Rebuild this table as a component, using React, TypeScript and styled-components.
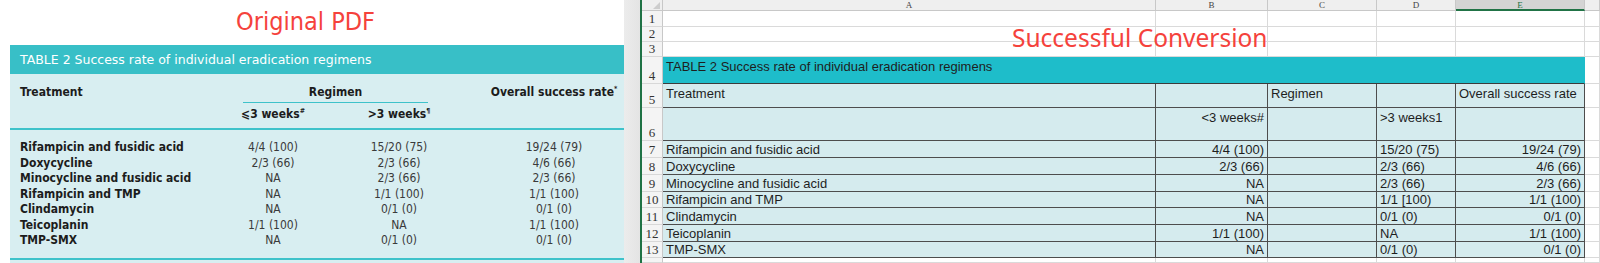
import React from "react";
import styled, { createGlobalStyle } from "styled-components";

const GlobalStyle = createGlobalStyle`
    html,
    body {
        margin: 0;
        padding: 0;
        background: #ffffff;
    }
    body {
        width: 1600px;
        height: 263px;
        overflow: hidden;
    }
`;

const pdfFont = `"DejaVu Sans Condensed", "DejaVu Sans", sans-serif`;
const sheetFont = `"Liberation Sans", Arial, sans-serif`;

const pdfRows = [
    ["Rifampicin and fusidic acid", "4/4 (100)", "15/20 (75)", "19/24 (79)"],
    ["Doxycycline", "2/3 (66)", "2/3 (66)", "4/6 (66)"],
    ["Minocycline and fusidic acid", "NA", "2/3 (66)", "2/3 (66)"],
    ["Rifampicin and TMP", "NA", "1/1 (100)", "1/1 (100)"],
    ["Clindamycin", "NA", "0/1 (0)", "0/1 (0)"],
    ["Teicoplanin", "1/1 (100)", "NA", "1/1 (100)"],
    ["TMP-SMX", "NA", "0/1 (0)", "0/1 (0)"],
];

// excel rows 7..13 : A, B, D, E
const sheetRows = [
    ["Rifampicin and fusidic acid", "4/4 (100)", "15/20 (75)", "19/24 (79)"],
    ["Doxycycline", "2/3 (66)", "2/3 (66)", "4/6 (66)"],
    ["Minocycline and fusidic acid", "NA", "2/3 (66)", "2/3 (66)"],
    ["Rifampicin and TMP", "NA", "1/1 [100)", "1/1 (100)"],
    ["Clindamycin", "NA", "0/1 (0)", "0/1 (0)"],
    ["Teicoplanin", "1/1 (100)", "NA", "1/1 (100)"],
    ["TMP-SMX", "NA", "0/1 (0)", "0/1 (0)"],
];

const columns = ["A", "B", "C", "D", "E", ""];

const App = () => {
    return (
        <Page>
            <GlobalStyle />
            <PdfPanel>
                <PdfTitle>Original PDF</PdfTitle>
                <PdfTable>
                    <PdfCaption>TABLE 2 Success rate of individual eradication regimens</PdfCaption>
                    <PdfHead>
                        <HeadCell>Treatment</HeadCell>
                        <RegimenCell>Regimen</RegimenCell>
                        <HeadCell $center $last>
                            Overall success rate<Sup>*</Sup>
                        </HeadCell>
                        <HeadCell />
                        <HeadCell $center>
                            ⩽3 weeks<Sup>#</Sup>
                        </HeadCell>
                        <HeadCell $center>
                            &gt;3 weeks<Sup>¶</Sup>
                        </HeadCell>
                        <HeadCell $last />
                    </PdfHead>
                    <PdfBody>
                        {pdfRows.map((row) => (
                            <React.Fragment key={row[0]}>
                                <PdfLabel>{row[0]}</PdfLabel>
                                <PdfValue>{row[1]}</PdfValue>
                                <PdfValue>{row[2]}</PdfValue>
                                <PdfValue $last>{row[3]}</PdfValue>
                            </React.Fragment>
                        ))}
                    </PdfBody>
                </PdfTable>
            </PdfPanel>
            <Gutter />
            <WindowEdge />
            <Sheet>
                <Corner />
                {columns.map((c, i) => (
                    <ColHead key={i} $selected={c === "E"}>
                        {c}
                    </ColHead>
                ))}

                {[1, 2, 3].map((r) => (
                    <React.Fragment key={r}>
                        <RowHead>{r}</RowHead>
                        {columns.map((_, i) => (
                            <Cell key={i} />
                        ))}
                    </React.Fragment>
                ))}

                <RowHead>4</RowHead>
                <TitleCell>TABLE 2 Success rate of individual eradication regimens</TitleCell>
                <Cell />

                <RowHead>5</RowHead>
                <Cell $body $top>Treatment</Cell>
                <Cell $body $top />
                <Cell $body $top>Regimen</Cell>
                <Cell $body $top />
                <Cell $body $top>Overall success rate</Cell>
                <Cell />

                <RowHead>6</RowHead>
                <Cell $body $top />
                <Cell $body $top $right>
                    &lt;3 weeks#
                </Cell>
                <Cell $body $top />
                <Cell $body $top>&gt;3 weeks1</Cell>
                <Cell $body $top />
                <Cell />

                {sheetRows.map((row, i) => (
                    <React.Fragment key={row[0]}>
                        <RowHead>{i + 7}</RowHead>
                        <Cell $body>{row[0]}</Cell>
                        <Cell $body $right>
                            {row[1]}
                        </Cell>
                        <Cell $body />
                        <Cell $body>{row[2]}</Cell>
                        <Cell $body $right>
                            {row[3]}
                        </Cell>
                        <Cell />
                    </React.Fragment>
                ))}

                {/* row 14, only its top edge is in view */}
                <RowHead />
                {columns.map((_, i) => (
                    <Cell key={i} />
                ))}

                <Callout>Successful Conversion</Callout>
            </Sheet>
        </Page>
    );
};

export default App;

const Page = styled.div`
    display: flex;
    width: 1600px;
    height: 263px;
    overflow: hidden;
    background: #ffffff;
`;

/* ---------- left : the pdf ---------- */

const PdfPanel = styled.section`
    width: 614px;
    margin-left: 10px;
    display: flex;
    flex-direction: column;
    font-family: ${pdfFont};
`;

const PdfTitle = styled.div`
    height: 45px;
    box-sizing: border-box;
    padding: 7px 0 0 226px;
    font-size: 25px;
    line-height: 30px;
    color: #f5423c;
`;

const PdfTable = styled.div`
    flex: 1;
    background: #d8eef1;
`;

const PdfCaption = styled.div`
    height: 29px;
    padding-left: 10px;
    background: #38bfc7;
    color: #ffffff;
    font-family: "DejaVu Sans", sans-serif;
    font-size: 12.5px;
    line-height: 29px;
`;

const PdfGrid = styled.div`
    display: grid;
    grid-template-columns: 190px 126px 126px 1fr;
    padding-left: 10px;
`;

const PdfHead = styled(PdfGrid)`
    padding-top: 10px;
    padding-bottom: 6px;
    row-gap: 3px;
    border-bottom: 2px solid #3ec2ca;
    font-size: 12px;
    font-weight: 700;
    line-height: 16px;
    color: #1c1c1c;
`;

const HeadCell = styled.div<{ $center?: boolean; $last?: boolean }>`
    white-space: nowrap;
    text-align: ${(p) => (p.$center ? "center" : "left")};
    padding-left: ${(p) => (p.$last ? "22px" : "0")};
`;

const RegimenCell = styled.div`
    grid-column: span 2;
    margin: 0 34px 0 33px;
    padding-bottom: 2px;
    border-bottom: 1px solid #3ec2ca;
    text-align: center;
`;

const Sup = styled.sup`
    font-size: 7px;
    line-height: 0;
    vertical-align: 5px;
`;

const PdfBody = styled(PdfGrid)`
    padding-top: 10px;
    padding-bottom: 9px;
    border-bottom: 2px solid #3ec2ca;
    font-size: 12px;
    line-height: 15.5px;
`;

const PdfLabel = styled.div`
    white-space: nowrap;
    font-weight: 700;
    color: #1c1c1c;
`;

const PdfValue = styled.div<{ $last?: boolean }>`
    white-space: nowrap;
    text-align: center;
    color: #3a3a3a;
    padding-left: ${(p) => (p.$last ? "22px" : "0")};
`;

const Gutter = styled.div`
    width: 16px;
    background: linear-gradient(to right, #ececec, #e4e4e4);
`;

const WindowEdge = styled.div`
    width: 2px;
    background: #1f7245;
`;

/* ---------- right : the spreadsheet ---------- */

const Sheet = styled.div`
    position: relative;
    flex: 1;
    display: grid;
    grid-template-columns: 21px 493px 112px 109px 79px 129px 1fr;
    grid-template-rows: 11px 16px 15px 15px 27px 24px 33px 17px 17px 17px 16px 17px 17px 16px 1fr;
    background: #ffffff;
    font-family: ${sheetFont};
    font-size: 13px;
    color: #1e1e1e;
`;

const Corner = styled.div`
    position: relative;
    box-sizing: border-box;
    background: #efefef;
    border-right: 1px solid #c8c8c8;
    border-bottom: 1px solid #c8c8c8;

    &::after {
        content: "";
        position: absolute;
        right: 2px;
        bottom: 1px;
        border-left: 7px solid transparent;
        border-bottom: 7px solid #cdcdcd;
    }
`;

const ColHead = styled.div<{ $selected?: boolean }>`
    box-sizing: border-box;
    display: flex;
    justify-content: center;
    align-items: center;
    background: ${(p) => (p.$selected ? "#d4d4d4" : "#efefef")};
    border-right: 1px solid #c8c8c8;
    border-bottom: ${(p) => (p.$selected ? "2px solid #217346" : "1px solid #c8c8c8")};
    font-family: "Liberation Serif", serif;
    font-size: 9px;
    line-height: 10px;
    color: ${(p) => (p.$selected ? "#217346" : "#444444")};
`;

const RowHead = styled.div`
    box-sizing: border-box;
    display: flex;
    justify-content: center;
    align-items: flex-end;
    background: #f4f4f4;
    border-right: 1px solid #c8c8c8;
    border-bottom: 1px solid #d8d8d8;
    font-family: "Liberation Serif", serif;
    font-size: 13px;
    line-height: 14px;
    color: #333333;
`;

const Cell = styled.div<{ $body?: boolean; $top?: boolean; $right?: boolean }>`
    box-sizing: border-box;
    display: flex;
    align-items: ${(p) => (p.$top ? "flex-start" : "flex-end")};
    justify-content: ${(p) => (p.$right ? "flex-end" : "flex-start")};
    padding: ${(p) => (p.$top ? "2px 3px 0" : "0 3px 0")};
    background: ${(p) => (p.$body ? "#d5ebee" : "#ffffff")};
    border-right: 1px solid ${(p) => (p.$body ? "#4d4d4d" : "#dadada")};
    border-bottom: 1px solid ${(p) => (p.$body ? "#4d4d4d" : "#dadada")};
    line-height: 15px;
    white-space: nowrap;
    overflow: hidden;
`;

const TitleCell = styled.div`
    grid-column: span 5;
    box-sizing: border-box;
    padding: 2px 3px 0;
    background: #1ebdca;
    border-right: 1px solid #1ebdca;
    border-bottom: 1px solid #3b3b3b;
    line-height: 15px;
    white-space: nowrap;
`;

const Callout = styled.div`
    position: absolute;
    left: 370px;
    top: 23px;
    font-family: "Noto Sans", "Open Sans", sans-serif;
    font-size: 24.5px;
    line-height: 30px;
    color: #f5423c;
    white-space: nowrap;
`;
